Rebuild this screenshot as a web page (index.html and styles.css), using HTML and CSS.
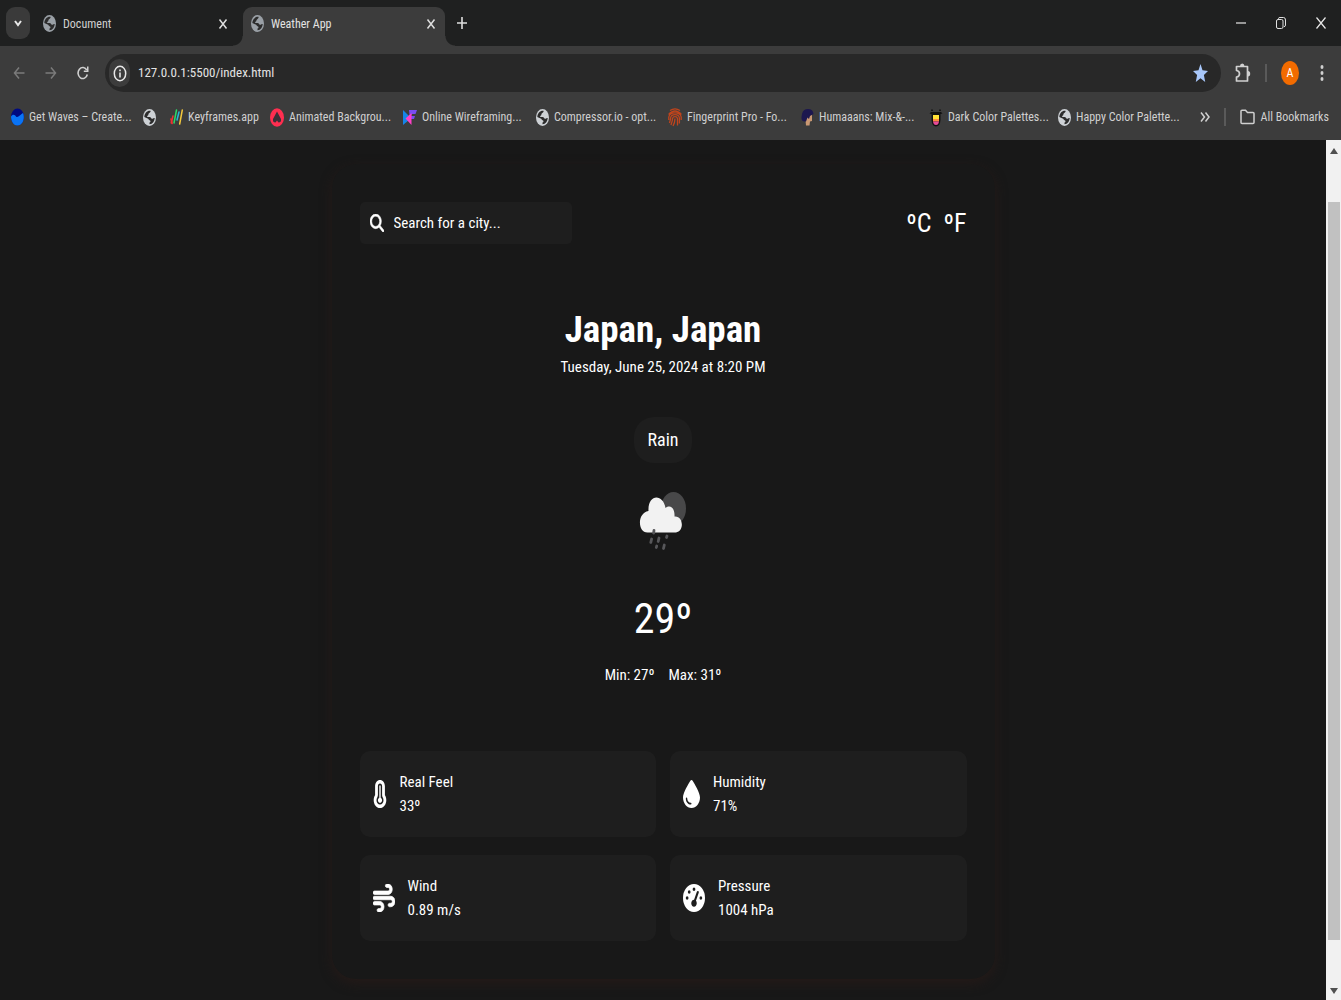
FILE: index.html
```html
<!DOCTYPE html>
<html lang="en">
<head>
<meta charset="utf-8">
<title>Weather App</title>
<link rel="stylesheet" href="styles.css">
</head>
<body>
<svg class="defs" aria-hidden="true">
  <symbol id="globe" viewBox="0 0 20 20" preserveAspectRatio="none">
    <circle cx="10" cy="10" r="10" fill="currentColor"/>
    <path class="land" d="M11.500 2.200C12.500 4.500 8.500 4.500 8.300 6.500C8.200 8 6.500 7.500 6.300 9.500H10C12.500 9.500 12 11.500 14 11.500C15.500 11.500 16 10.500 18 10.600C17.800 14 15 17.800 10 18V16C11.500 15.800 12 14.500 11 13.500C9.500 13.300 8.500 12.500 8 11.500L2 9.500C2.300 5 6.500 1.700 11.500 2.200Z"/>
    <path d="M12 3.500C12.500 5 10 5.500 10 7C11.500 8 14 7.500 14.500 9.500C16 10 17 9 18 8.500C17.300 6 15 3.500 12 3.500Z" fill="currentColor"/>
  </symbol>
  <symbol id="close" viewBox="0 0 10 12" preserveAspectRatio="none"><path d="M1.500 1.500L8.500 10.500M8.500 1.500L1.500 10.500" stroke="currentColor" stroke-width="1.500" fill="none"/></symbol>
</svg>

<header class="browser">
  <div class="tabstrip">
    <button class="tab-search" aria-label="Search tabs"><svg width="10" height="8" viewBox="0 0 10 8"><path d="M2 2L5 6L8 2" stroke="#e8e8e8" stroke-width="2" fill="none"/></svg></button>
    <div class="tab">
      <svg class="globe dim"><use href="#globe"/></svg>
      <span class="tab-title">Document</span>
      <button class="tab-close" aria-label="Close Document"><svg width="10" height="12"><use href="#close"/></svg></button>
    </div>
    <div class="tab active">
      <svg class="globe dim"><use href="#globe"/></svg>
      <span class="tab-title">Weather App</span>
      <button class="tab-close" aria-label="Close Weather App"><svg width="10" height="12"><use href="#close"/></svg></button>
    </div>
    <button class="new-tab" aria-label="New tab"><svg width="12" height="14" viewBox="0 0 12 14"><path d="M1 7H11M6 1V13" stroke="#dedede" stroke-width="1.600"/></svg></button>
    <div class="window-controls">
      <button aria-label="Minimize"><svg width="12" height="14" viewBox="0 0 12 14"><path d="M1 7H11" stroke="#e8e8e8" stroke-width="1.200"/></svg></button>
      <button aria-label="Restore"><svg width="12" height="14" viewBox="0 0 12 14" fill="none" stroke="#e0e0e0"><rect x="1.500" y="3.500" width="6.500" height="9" rx="1.500"/><path d="M3.500 3V2.500Q3.500 1.500 5 1.500H8.500Q10.500 1.500 10.500 4V9Q10.500 10.500 9 10.800"/></svg></button>
      <button aria-label="Close"><svg width="12" height="14" viewBox="0 0 12 14"><path d="M1.500 1.500L10.500 12.500M10.500 1.500L1.500 12.500" stroke="#e8e8e8" stroke-width="1.200"/></svg></button>
    </div>
  </div>

  <div class="toolbar">
    <nav class="history">
      <button aria-label="Back"><svg width="12" height="14" viewBox="0 0 12 14"><path d="M11.500 7H1.500M6 1.500L1.500 7L6 12.500" stroke="#7b7b7b" stroke-width="1.500" fill="none"/></svg></button>
      <button aria-label="Forward"><svg width="12" height="14" viewBox="0 0 12 14"><path d="M.5 7H10.500M6 1.500L10.500 7L6 12.500" stroke="#7b7b7b" stroke-width="1.500" fill="none"/></svg></button>
      <button aria-label="Reload"><svg width="12" height="14" viewBox="0 0 12 14"><path d="M10.300 8.500A4.700 5.500 0 1 1 9.800 4.200" stroke="#d0d0d0" stroke-width="1.600" fill="none"/><path d="M11.500 .5V6H6.800V4.600H10V.5Z" fill="#d0d0d0"/></svg></button>
    </nav>
    <div class="omnibox">
      <button class="site-info" aria-label="Site information"><svg width="14" height="17" viewBox="0 0 14 17"><ellipse cx="7" cy="8.500" rx="5.700" ry="7.200" fill="none" stroke="#e8e8e8" stroke-width="1.500"/><path d="M7 7.500V12.500M7 4.500V6.200" stroke="#e8e8e8" stroke-width="1.600"/></svg></button>
      <input class="address" type="text" aria-label="Address" value="127.0.0.1:5500/index.html">
      <button aria-label="Edit bookmark"><svg width="15" height="18" viewBox="0 0 15 18"><path d="M7.500 0L9.500 6.300L15 6.900L10.900 11L12.200 18L7.500 14.200L2.800 18L4.100 11L0 6.900L5.500 6.300Z" fill="#a8c7fa"/></svg></button>
    </div>
    <button aria-label="Extensions"><svg width="16" height="20" viewBox="0 0 16 20"><path d="M1.500 3.500H12.500V18H1.500V14Q4.500 13.500 4.500 10.700Q4.500 8 1.500 7.500Z" fill="none" stroke="#d0d0d0" stroke-width="1.700" stroke-linejoin="round"/><path d="M5 3A2.200 2.500 0 0 1 9.400 3ZM13 8A2.200 2.700 0 0 1 13 13.400Z" fill="#d0d0d0"/></svg></button>
    <span class="divider"></span>
    <button class="avatar" aria-label="Profile">A</button>
    <button aria-label="Menu"><svg width="4" height="18" viewBox="0 0 4 18" fill="#d0d0d0"><ellipse cx="2" cy="3" rx="1.500" ry="1.900"/><ellipse cx="2" cy="9" rx="1.500" ry="1.900"/><ellipse cx="2" cy="15" rx="1.500" ry="1.900"/></svg></button>
  </div>

  <nav class="bookmarks">
    <a href="#"><svg width="13" height="18" viewBox="0 0 13 18"><ellipse cx="6.500" cy="9" rx="6.500" ry="8.500" fill="#000a80"/><path d="M0 8.500C2 5.500 4 7 5 8.500C7 10.500 9 6.500 12 5C14 9 12.500 17.500 6.500 17.500C2 17.500 0 12.500 0 8.500Z" fill="#0a74f5"/></svg><span class="label">Get Waves – Create...</span></a>
    <a href="#" aria-label="Bookmark"><svg class="globe"><use href="#globe"/></svg></a>
    <a href="#"><svg width="13" height="18" viewBox="0 0 13 18" stroke-width="1.500" stroke-linecap="round"><path d="M1 11L2.200 15.500" stroke="#e33"/><path d="M1.200 15L3 8" stroke="#e33"/><path d="M4 15L6.500 2" stroke="#2bd968"/><path d="M7 12L9 4" stroke="#26b8d8"/><path d="M9.700 16L12.300 2" stroke="#f4c93c"/></svg><span class="label tiny">Keyframes.app</span></a>
    <a href="#"><svg width="14" height="19" viewBox="0 0 14 19"><ellipse cx="7" cy="9.500" rx="7" ry="9.300" fill="#ff2e50"/><path d="M7 3.500L11 11Q11.500 14.500 8.500 14.500L7 12.500L5.500 14.500Q2.500 14.500 3 11Z" fill="#3c3038"/></svg><span class="label">Animated Backgrou...</span></a>
    <a href="#"><svg width="14" height="17" viewBox="0 0 14 17"><path d="M0 1L6 7V11L0 16Z" fill="#1685e8"/><path d="M6 1H14L12.500 5H9L8 7H12L11 10H7Z" fill="#7a4cf3"/><path d="M8.500 4V16L2.500 9.500Z" fill="#ff3fc8"/></svg><span class="label">Online Wireframing...</span></a>
    <a href="#"><svg class="globe"><use href="#globe"/></svg><span class="label">Compressor.io - opt...</span></a>
    <a href="#"><svg width="14" height="19" viewBox="0 0 14 19" fill="none" stroke="#c0441c" stroke-width="1.300"><path d="M2 2.500Q7-.8 12 2.500M.6 6.500Q7-.5 13.400 6.500M.8 12V9Q1.500 4.800 7 4.800T13.200 9V12M1.500 15Q2.500 12 2.600 10Q3 6.700 7 6.700T11.400 10V15.500M3 17Q4.500 13 4.500 10.500Q5 8.600 7 8.600T9.500 10.500V17.500M5 18Q7 14.500 7 10.500"/></svg><span class="label">Fingerprint Pro - Fo...</span></a>
    <a href="#"><svg width="13" height="18" viewBox="0 0 13 18"><path d="M4 7H11V13L9 13.500L8.500 17.500H5Z" fill="#c99873"/><path d="M1 6Q2 1 7 1Q12 1 12.500 6L9 8L8 11L6.500 9.500L5 13.500Q0 14 .5 9Z" fill="#1c174f"/></svg><span class="label short">Humaaans: Mix-&amp;-...</span></a>
    <a href="#"><svg width="14" height="19" viewBox="0 0 14 19"><path d="M.5 5.500L2 4H12L13.500 5.500L11.500 6V12Q11 18.500 7 18.500T2.500 12V6Z" fill="#111"/><path d="M4 7H10V11H4Z" fill="#ffe135"/><path d="M4 11H10V13.500H4Z" fill="#ff8a3c"/><path d="M4 13.500H10Q9.500 17 7 17T4 13.500Z" fill="#e84a97"/><path d="M2 1.500H4V3H2ZM10 1.500H12V3H10Z" fill="#181818"/></svg><span class="label short">Dark Color Palettes...</span></a>
    <a href="#"><svg class="globe"><use href="#globe"/></svg><span class="label">Happy Color Palette...</span></a>
    <div class="bookmarks-end">
      <button aria-label="More bookmarks"><svg width="10" height="12" viewBox="0 0 10 12"><path d="M1 1.500L4.500 6L1 10.500M5.500 1.500L9 6L5.500 10.500" fill="none" stroke="#d0d0d0" stroke-width="1.500"/></svg></button>
      <span class="divider"></span>
      <a href="#"><svg width="15" height="16" viewBox="0 0 15 16"><path d="M1 2Q1 1.200 2 1.200H5.500L7.500 3.500H13Q14 3.500 14 4.500V13.500Q14 14.500 13 14.500H2Q1 14.500 1 13.500Z" fill="none" stroke="#d0d0d0" stroke-width="1.500"/></svg><span>All Bookmarks</span></a>
    </div>
  </nav>
</header>

<div class="viewport">
  <main class="page">
    <section class="weather">
      <div class="weather-top">
        <label class="search">
          <svg width="14" height="18" viewBox="0 0 512 512" preserveAspectRatio="none"><path fill="#fff" stroke="#fff" stroke-width="16" d="M416 208c0 45.900-14.900 88.300-40 122.700L502.600 457.400c12.500 12.500 12.500 32.800 0 45.300s-32.800 12.500-45.300 0L330.700 376c-34.400 25.200-76.800 40-122.700 40C93.100 416 0 322.900 0 208S93.100 0 208 0S416 93.100 416 208zM208 352a144 144 0 1 0 0-288 144 144 0 1 0 0 288z"/></svg>
          <input type="text" placeholder="Search for a city..." aria-label="Search for a city">
        </label>
        <div class="units"><button>ºC</button><button>ºF</button></div>
      </div>

      <div class="current">
        <h1>Japan, Japan</h1>
        <p class="date">Tuesday, June 25, 2024 at 8:20 PM</p>
        <p class="forecast">Rain</p>
        <svg class="weather-icon" width="48" height="60" viewBox="0 0 48 60">
          <ellipse cx="34.500" cy="17.500" rx="12.500" ry="16.500" fill="#484849"/>
          <path d="M8.500 41.500C-2 41-1.500 21.500 9.500 20C8.500 3 24 2 26.500 17C32 13 36 18 35.500 25.500C44.500 24.500 45.500 40.500 37 41.500Z" fill="#f2f2f2"/>
          <g stroke="#57575a" stroke-width="2.800" stroke-linecap="round"><path d="M15 39.500L14.600 42M12.600 48L11.800 51.500M20 47L19.200 50.500M28 45L27.500 46.500M17.700 55L17.300 56.500M25.300 54L24.500 57.500"/></g>
        </svg>
        <p class="temperature">29º</p>
        <div class="minmax"><p>Min: 27º</p><p>Max: 31º</p></div>
      </div>

      <div class="details">
        <article class="detail">
          <svg width="14" height="28" viewBox="0 0 320 512" preserveAspectRatio="none"><path fill="#fff" d="M160 64c-26.500 0-48 21.500-48 48V276.500c0 17.300-7.100 31.900-15.300 42.500C86.200 332.600 80 349.500 80 368c0 44.200 35.800 80 80 80s80-35.800 80-80c0-18.500-6.200-35.400-16.700-48.900c-8.200-10.600-15.300-25.200-15.300-42.500V112c0-26.500-21.500-48-48-48zM48 112C48 50.200 98.100 0 160 0s112 50.100 112 112V276.500c0 .1 .1 .3 .2 .6c.2 .6 .8 1.600 1.700 2.800c18.900 24.400 30.100 55 30.100 88.100c0 79.500-64.500 144-144 144S16 447.500 16 368c0-33.200 11.200-63.800 30.100-88.100c.9-1.200 1.500-2.200 1.700-2.800c.1-.3 .2-.5 .2-.6V112zM208 368c0 26.500-21.500 48-48 48s-48-21.500-48-48c0-20.900 13.400-38.700 32-45.300V112c0-8.800 7.200-16 16-16s16 7.200 16 16V322.700c18.600 6.600 32 24.400 32 45.300z"/></svg>
          <div><p>Real Feel</p><p>33º</p></div>
        </article>
        <article class="detail">
          <svg width="17" height="28" viewBox="0 0 384 512" preserveAspectRatio="none"><path fill="#fff" d="M192 512C86 512 0 426 0 320C0 228.800 130.200 57.700 166.600 11.700C172.600 4.200 181.500 0 191.100 0h1.800c9.600 0 18.500 4.200 24.500 11.700C253.800 57.700 384 228.800 384 320c0 106-86 192-192 192zM96 336c0-8.800-7.200-16-16-16s-16 7.200-16 16c0 61.900 50.100 112 112 112c8.800 0 16-7.200 16-16s-7.200-16-16-16c-44.200 0-80-35.800-80-80z"/></svg>
          <div><p>Humidity</p><p>71%</p></div>
        </article>
        <article class="detail">
          <svg width="22" height="28" viewBox="0 0 512 512" preserveAspectRatio="none"><path fill="#fff" stroke="#fff" stroke-width="14" d="M288 32c0 17.700 14.300 32 32 32h32c17.700 0 32 14.300 32 32s-14.300 32-32 32H32c-17.700 0-32 14.300-32 32s14.300 32 32 32H352c53 0 96-43 96-96s-43-96-96-96H320c-17.700 0-32 14.300-32 32zm64 352c0 17.700 14.300 32 32 32h32c53 0 96-43 96-96s-43-96-96-96H32c-17.700 0-32 14.300-32 32s14.300 32 32 32H416c17.700 0 32 14.300 32 32s-14.300 32-32 32H384c-17.700 0-32 14.300-32 32zM128 512h32c53 0 96-43 96-96s-43-96-96-96H32c-17.700 0-32 14.300-32 32s14.300 32 32 32H160c17.700 0 32 14.300 32 32s-14.300 32-32 32H128c-17.700 0-32 14.300-32 32s14.300 32 32 32z"/></svg>
          <div><p>Wind</p><p>0.89 m/s</p></div>
        </article>
        <article class="detail">
          <svg width="22" height="28" viewBox="0 0 512 512" preserveAspectRatio="none"><path fill="#fff" d="M0 256a256 256 0 1 1 512 0A256 256 0 1 1 0 256zM288 96a32 32 0 1 0 -64 0 32 32 0 1 0 64 0zM256 416c35.300 0 64-28.700 64-64c0-17.400-6.900-33.100-18.100-44.600L366 161.700c5.300-12.100-.2-26.300-12.300-31.600s-26.300 .2-31.600 12.300L257.900 288c-.6 0-1.300 0-1.900 0c-35.300 0-64 28.700-64 64s28.700 64 64 64zM176 144a32 32 0 1 0 -64 0 32 32 0 1 0 64 0zM96 288a32 32 0 1 0 0-64 32 32 0 1 0 0 64zm352-32a32 32 0 1 0 -64 0 32 32 0 1 0 64 0z"/></svg>
          <div><p>Pressure</p><p>1004 hPa</p></div>
        </article>
      </div>
    </section>
  </main>
  <div class="scrollbar" aria-hidden="true">
    <svg width="8" height="6" viewBox="0 0 8 6"><path d="M0 6L4 0L8 6Z" fill="#505050"/></svg>
    <div class="track"><div class="thumb"></div></div>
    <svg width="8" height="6" viewBox="0 0 8 6"><path d="M0 0L4 6L8 0Z" fill="#505050"/></svg>
  </div>
</div>
</body>
</html>
```
FILE: styles.css
```css
* { box-sizing: border-box; margin: 0; padding: 0; }

body {
  display: flex;
  flex-direction: column;
  min-height: 100vh;
  background: #181818;
  color: #fff;
  font-family: "Roboto Condensed", "Noto Sans CJK JP", sans-serif;
  font-size: 15px;
  line-height: 24px;
}

button, input { font: inherit; color: inherit; background: none; border: 0; outline: 0; }
button { display: grid; place-items: center; flex: none; }
a { color: inherit; text-decoration: none; }
svg { display: block; flex: none; }
.defs { display: none; }

/* Browser chrome */
.browser { background: #3c3c3c; color: #d0d0d0; font-size: 12px; line-height: 20px; }
.globe { width: 13px; height: 17px; color: #cdd1d5; }
.globe.dim { color: #9aa0a6; }
.land { fill: #2c2c2c; }

.tabstrip { display: flex; align-items: center; height: 46px; padding: 0 5px 0 6px; background: #1f2020; }
.tab-search { width: 24px; height: 32px; border-radius: 9px; background: #3a3a3a; }
.tab { display: flex; align-items: center; gap: 7px; width: 202px; height: 39px; padding: 0 8px 6px; align-self: flex-end; }
.tab:not(.active) { margin-left: 5px; margin-right: 6px; }
.tab-title { flex: 1; }
.tab-close { width: 12px; height: 20px; color: #dedede; }
.tab.active { position: relative; background: #3c3c3c; border-radius: 9px 9px 0 0; color: #e3e3e3; }
.tab.active::before, .tab.active::after { content: ""; position: absolute; bottom: 0; width: 10px; height: 10px; }
.tab.active::before { left: -10px; background: radial-gradient(circle at 0 0, transparent 9px, #3c3c3c 10px); }
.tab.active::after { right: -10px; background: radial-gradient(circle at 100% 0, transparent 9px, #3c3c3c 10px); }
.new-tab { width: 34px; height: 32px; }
.window-controls { display: flex; margin-left: auto; }
.window-controls button { width: 40px; height: 32px; }
.window-controls button:last-child { width: 30px; margin-left: 5px; }

.toolbar { display: flex; align-items: center; gap: 14px; height: 54px; padding: 0 17px 0 13px; }
.history { display: flex; gap: 20px; padding-right: 2px; }
.omnibox { display: flex; align-items: center; flex: 1; gap: 8px; height: 38px; padding: 0 13px 0 4px; border-radius: 19px; background: #282828; }
.site-info { width: 21px; height: 28px; border-radius: 11px; background: #3c3c3c; }
.address { flex: 1; min-width: 0; font-size: 13px; color: #e3e3e3; }
.divider { width: 2px; height: 18px; background: #5a5a5a; }
.avatar { width: 18px; height: 24px; margin-right: 7px; border-radius: 50%; background: #f26b00; color: #fff; font-size: 12px; }

.bookmarks { display: flex; align-items: center; gap: 14px; height: 40px; padding: 0 12px 6px 11px; white-space: nowrap; }
.bookmarks a { display: flex; align-items: center; gap: 5px; }
.label { width: 100px; }
.label.short { width: 96px; }
.label.tiny { width: 68px; }
.bookmarks-end { display: flex; align-items: center; gap: 14px; margin-left: auto; }

/* Page area */
.viewport { display: flex; flex: 1; }
.page { flex: 1; padding: 24px 0 22px; }
.weather { width: 50%; margin: 0 auto; padding: 38px 28px; border-radius: 24px; box-shadow: 0 4px 12px #251a18; }
.weather-top { display: flex; justify-content: space-between; align-items: center; }
.search { display: flex; align-items: center; gap: 10px; width: 35%; height: 42px; padding: 0 10px; border-radius: 5px; background: #1e1e1e; }
.search input { flex: 1; min-width: 0; }
.search input::placeholder { color: #fff; opacity: 1; }
.units { display: flex; gap: 12px; font-size: 26px; line-height: 36px; }

.current { display: flex; flex-direction: column; align-items: center; padding: 60px 0 64px; text-align: center; }
.current h1 { font-size: 37px; line-height: 51px; }
.forecast { margin-top: 38px; padding: 11px 13px; border-radius: 20px; background: #1e1e1e; font-size: 18px; }
.weather-icon { margin-top: 28px; }
.temperature { margin-top: 37px; font-size: 42px; line-height: 62px; }
.minmax { display: flex; gap: 14px; margin-top: 13px; }

.details { display: grid; grid-template-columns: 1fr 1fr; gap: 18px 14px; }
.detail { display: flex; align-items: center; gap: 13px; height: 86px; padding: 0 13px; border-radius: 10px; background: #1e1e1e; }

.scrollbar { display: flex; flex-direction: column; align-items: center; width: 15px; padding: 8px 1px 7px; gap: 8px; background: #f1f1f1; }
.track { display: flex; flex-direction: column; flex: 1; width: 12px; padding: 40px 0; }
.thumb { flex: 1; background: #c1c1c1; }
```
